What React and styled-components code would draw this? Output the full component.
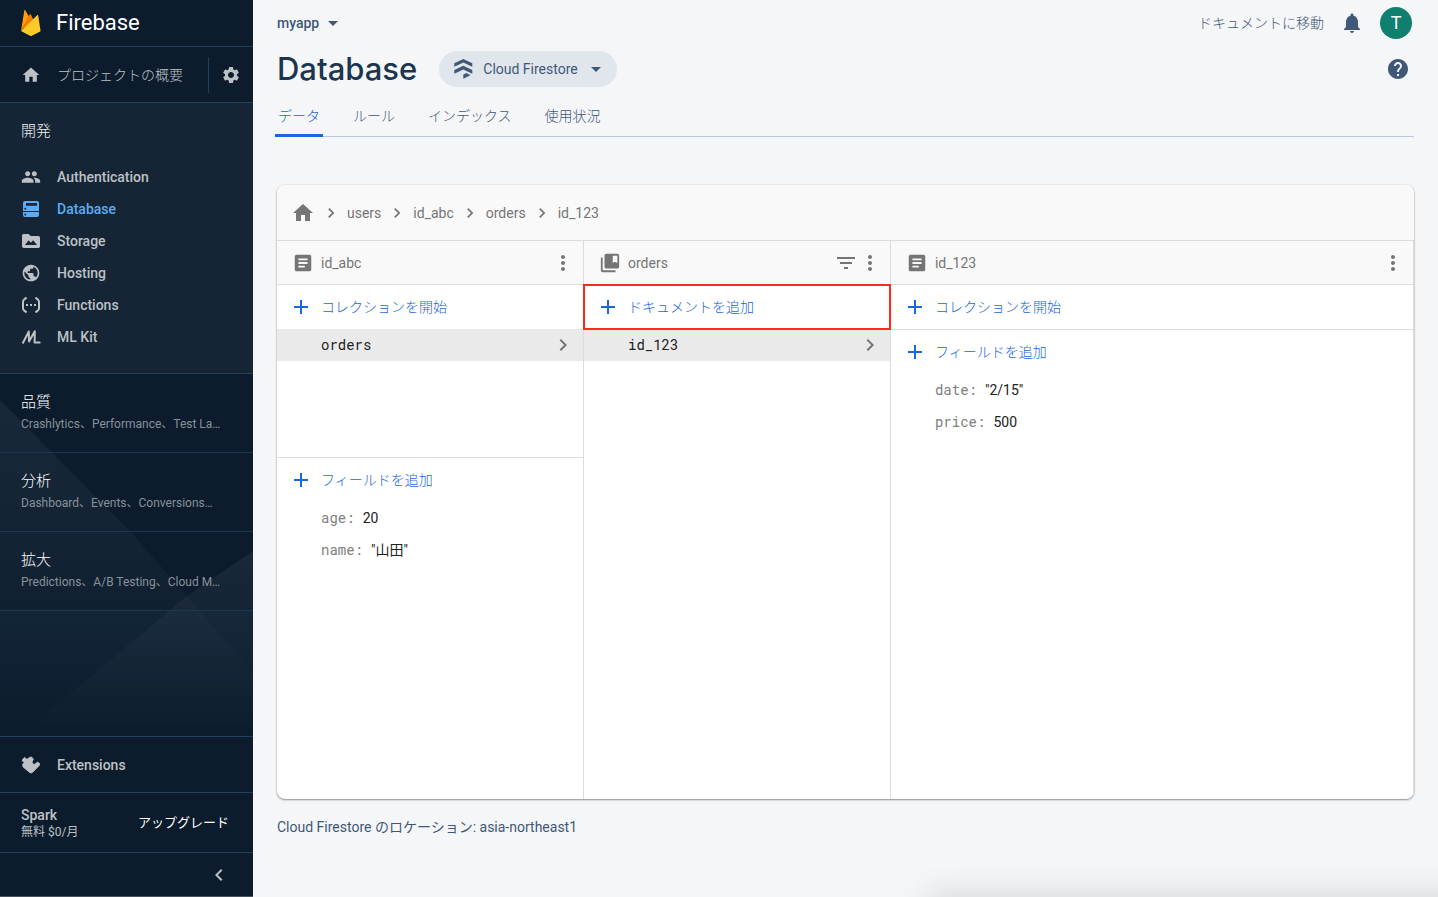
import React from "react";
import styled, { createGlobalStyle, css } from "styled-components";
import {
  MdHome,
  MdSettings,
  MdPeople,
  MdPublic,
  MdNotifications,
  MdHelp,
  MdMoreVert,
  MdFilterList,
  MdChevronRight,
  MdChevronLeft,
  MdArticle,
  MdCollectionsBookmark,
  MdArrowDropDown,
  MdAdd,
} from "react-icons/md";

const sans = `Roboto, "Noto Sans CJK JP", sans-serif`;
const mono = `"Roboto Mono", "DejaVu Sans Mono", "Noto Sans CJK JP", monospace`;
const display = `"Google Sans", Inter, Roboto, sans-serif`;

const color = {
  nav: "#0c1c2d",
  navRaised: "#152536",
  navLine: "#22405e",
  navText: "#bcc1c5",
  navActive: "#5aacf5",
  page: "#f5f6f8",
  slate: "#3f5878",
  blue: "#1967e0",
  grey: "#757575",
  line: "#dcdcdc",
};

const GlobalStyle = createGlobalStyle`
  *, *::before, *::after { box-sizing: border-box; }
  body { margin: 0; background: ${color.page}; font: 400 14px/20px ${sans}; color: #212121; }
  button { font: inherit; color: inherit; background: none; border: 0; padding: 0; margin: 0; cursor: pointer; text-align: left; }
  a { color: inherit; text-decoration: none; }
  ul, ol, dl, dd { list-style: none; margin: 0; padding: 0; }
  h1, h2, h3, p { margin: 0; font: inherit; }
  svg { display: block; flex: none; }
`;

const Shell = styled.div`
  display: flex;
  min-height: 100vh;
`;

/* ---------- Side navigation ---------- */

const Sidebar = styled.nav`
  position: relative;
  z-index: 0;
  flex: 0 0 253px;
  display: flex;
  flex-direction: column;
  background: ${color.nav};
  color: ${color.navText};
  border-bottom: 1px solid #47525d;
`;

const Facets = styled.svg`
  position: absolute;
  z-index: -1;
  left: 0;
  top: 374px;
  width: 253px;
  height: 362px;
`;

const Brand = styled.a`
  display: flex;
  align-items: center;
  gap: 15px;
  height: 47px;
  padding-left: 21px;
  border-bottom: 1px solid ${color.navLine};
  font-size: 22px;
  line-height: 28px;
  color: #fff;
`;

const Overview = styled.div`
  display: flex;
  align-items: center;
  height: 56px;
  border-bottom: 1px solid ${color.navLine};
`;

const OverviewLink = styled.a`
  flex: 1;
  display: flex;
  align-items: center;
  gap: 16px;
  height: 36px;
  padding-left: 21px;
  border-right: 1px solid ${color.navLine};
  font-weight: 300;
`;

const GearButton = styled.button`
  display: grid;
  place-items: center;
  width: 44px;
  height: 36px;
`;

const DevelopSection = styled.section`
  padding-bottom: 20px;
  background: ${color.navRaised};
  border-bottom: 1px solid ${color.navLine};
`;

const SectionTitle = styled.h2`
  margin-bottom: 2px;
  padding-left: 21px;
  font-size: 15px;
  font-weight: 300;
  line-height: 56px;
  color: #f2f3f4;
`;

const NavLink = styled.a`
  display: flex;
  align-items: center;
  gap: 16px;
  height: ${(p) => (p.$tall ? 56 : 32)}px;
  padding-left: 21px;
  font-weight: 500;
  color: ${(p) => (p.$active ? color.navActive : "inherit")};
  border-bottom: ${(p) => (p.$tall ? `1px solid ${color.navLine}` : "0")};
`;

const Group = styled.button`
  display: block;
  width: 100%;
  padding: 16px 24px 20px 21px;
  border-bottom: 1px solid #1b3853;
`;

const GroupTitle = styled.span`
  display: block;
  margin-bottom: 2px;
  font-size: 15px;
  font-weight: 300;
  line-height: 24px;
  color: #fff;
`;

const GroupSummary = styled.span`
  display: block;
  overflow: hidden;
  font-size: 12px;
  line-height: 16px;
  white-space: nowrap;
  text-overflow: ellipsis;
  color: #87919a;
`;

const Spacer = styled.div`
  flex: 1;
  border-bottom: 1px solid ${color.navLine};
`;

const Plan = styled.div`
  display: flex;
  align-items: center;
  justify-content: space-between;
  height: 60px;
  padding: 0 24px 0 21px;
  border-bottom: 1px solid ${color.navLine};
`;

const PlanName = styled.p`
  font-weight: 500;
  line-height: 18px;
`;

const PlanPrice = styled.p`
  font-size: 12px;
  line-height: 16px;
`;

const UpgradeButton = styled.button`
  font-size: 13px;
  color: #fff;
`;

const CollapseButton = styled.button`
  display: flex;
  align-items: center;
  justify-content: flex-end;
  height: 43px;
  padding-right: 22px;
`;

/* ---------- Page header ---------- */

const Main = styled.main`
  flex: 1;
  min-width: 0;
  display: flex;
  flex-direction: column;
  padding: 0 24px;
`;

const TopBar = styled.header`
  display: flex;
  align-items: center;
  justify-content: space-between;
  height: 46px;
  padding-right: 2px;
  color: ${color.slate};
`;

const ProjectButton = styled.button`
  display: flex;
  align-items: center;
  gap: 2px;
  font-weight: 500;
`;

const TopActions = styled.div`
  display: flex;
  align-items: center;
  gap: 16px;
`;

const DocsLink = styled.a`
  font-weight: 300;
`;

const Avatar = styled.button`
  width: 32px;
  height: 32px;
  border-radius: 50%;
  background: #0f7f6e;
  color: #fff;
  font-size: 18px;
  text-align: center;
`;

const TitleRow = styled.div`
  display: flex;
  align-items: center;
  height: 46px;
`;

const PageTitle = styled.h1`
  margin-right: 22px;
  font: 500 31px/40px ${display};
  color: #1b3550;
`;

const ProductButton = styled.button`
  display: flex;
  align-items: center;
  height: 36px;
  padding: 0 9px 0 12px;
  border-radius: 18px;
  background: #e1e6ed;
  color: ${color.slate};
`;

const ProductName = styled.span`
  margin: 0 6px 0 8px;
`;

const IconButton = styled.button`
  display: grid;
  place-items: center;
  width: ${(p) => p.$size || 24}px;
  height: ${(p) => p.$size || 24}px;
  margin-left: ${(p) => (p.$end ? "auto" : 0)};
  color: ${(p) => p.$tone || "inherit"};
`;

const Tabs = styled.div`
  display: flex;
  gap: 27px;
  height: 45px;
  margin: 0 0 48px -2px;
  border-bottom: 1px solid #b7c7dc;
`;

const Tab = styled.button`
  height: 45px;
  padding: 5px 3px 0;
  font-weight: 300;
  color: ${color.slate};
  border-bottom: 3px solid transparent;
  ${(p) =>
    p.$active &&
    css`
      color: ${color.blue};
      border-bottom-color: ${color.blue};
    `}
`;

/* ---------- Data browser ---------- */

const Card = styled.section`
  flex: 1;
  display: flex;
  flex-direction: column;
  overflow: hidden;
  border-radius: 8px;
  background: #fff;
  box-shadow: 0 1px 2px rgba(0, 0, 0, 0.4), 0 0 2px rgba(0, 0, 0, 0.14);
`;

const Breadcrumbs = styled.ol`
  display: flex;
  align-items: center;
  gap: 6px;
  height: 56px;
  padding-left: 14px;
  background: #f9f9f9;
  border-bottom: 1px solid ${color.line};
  color: ${color.grey};
`;

const Crumb = styled.li`
  display: flex;
  align-items: center;
  gap: 6px;
`;

const Columns = styled.div`
  flex: 1;
  display: grid;
  grid-template-columns: 27fr 27fr 46fr;
`;

const Column = styled.section`
  min-width: 0;
  border-right: 1px solid ${color.line};
`;

const ColumnHeader = styled.header`
  display: flex;
  align-items: center;
  gap: 7px;
  height: 44px;
  padding: 0 8px 0 15px;
  background: #f9f9f9;
  border-bottom: 1px solid ${color.line};
  color: ${color.grey};
`;

const ColumnTools = styled.div`
  display: flex;
  margin-left: auto;
`;

const AddButton = styled.button`
  position: relative;
  display: flex;
  align-items: center;
  gap: 8px;
  width: 100%;
  height: ${(p) => (p.$divided ? 45 : 44)}px;
  padding-left: 12px;
  font-weight: 300;
  color: ${color.blue};
  border-bottom: ${(p) => (p.$divided ? `1px solid ${color.line}` : "0")};
  ${(p) =>
    p.$highlighted &&
    css`
      outline: 2px solid #fb2a1c;
      outline-offset: -1px;
    `}
`;

const ItemList = styled.ul`
  min-height: ${(p) => (p.$split ? 129 : 32)}px;
  border-bottom: ${(p) => (p.$split ? `1px solid ${color.line}` : "0")};
`;

const Item = styled.a`
  display: flex;
  align-items: center;
  justify-content: space-between;
  height: 32px;
  padding: 0 8px 0 44px;
  background: #eaeaea;
  font-family: ${mono};
`;

const Fields = styled.dl`
  padding-left: 44px;
`;

const Field = styled.div`
  display: flex;
  gap: 8px;
  line-height: 32px;
`;

const FieldName = styled.dt`
  font-family: ${mono};
  color: #808080;
`;

const Location = styled.p`
  margin: 18px 0 60px;
  color: ${color.slate};
`;

const DockShadow = styled.div`
  position: fixed;
  left: 65%;
  right: -20px;
  bottom: -24px;
  height: 20px;
  box-shadow: 0 0 32px 8px rgba(0, 0, 0, 0.12);
  pointer-events: none;
`;

/* ---------- Drawings ---------- */

const FirebaseLogo = () => (
  <svg width="20" height="26" viewBox="0 0 20 26" aria-hidden="true">
    <path fill="#ffa000" d="M0 21 3.3.6c.1-.6.9-.7 1.2-.2L8 6.8z" />
    <path fill="#f57c00" d="M12.4 9.8 9.8 4.4c-.3-.5-.9-.5-1.2 0L0 21z" />
    <path fill="#ffca28" d="M19.600 21.200 17.200 5.500c-.1-.5-.7-.7-1.1-.3L0 21l9 4.800c.6.3 1.300.3 1.900 0z" />
  </svg>
);

const Glyph = ({ size = 20, children }) => (
  <svg width={size} height={size} viewBox={`0 0 ${size} ${size}`} fill="currentColor" aria-hidden="true">
    {children}
  </svg>
);

const DatabaseIcon = () => (
  <Glyph>
    <path
      fillRule="evenodd"
      d="M4 2h12a2 2 0 0 1 2 2v8H2V4a2 2 0 0 1 2-2zm1 2v2.700h11V4zM4.300 8.800a1 1 0 1 0 0 2 1 1 0 0 0 0-2zM2 13h16v3a2 2 0 0 1-2 2H4a2 2 0 0 1-2-2zm2.300 1.500a1 1 0 1 0 0 2 1 1 0 0 0 0-2z"
    />
  </Glyph>
);

const StorageIcon = () => (
  <Glyph>
    <path
      fillRule="evenodd"
      d="M2.700 3h5l2 2h7.600c.9 0 1.700.8 1.700 1.700v8.600c0 .9-.8 1.700-1.700 1.700H2.700C1.800 17 1 16.200 1 15.300V4.700C1 3.800 1.800 3 2.700 3zM4 14h12l-3.800-4.800-2.500 2.600L7.600 9.300z"
    />
  </Glyph>
);

const FunctionsIcon = () => (
  <Glyph>
    <path
      fill="none"
      stroke="currentColor"
      strokeWidth="2"
      d="M5.600 2.600 3.200 4.400Q2 5.400 2 7v6q0 1.600 1.200 2.600l2.400 1.800M14.400 2.600l2.400 1.800Q18 5.400 18 7v6q0 1.600-1.200 2.600l-2.400 1.800"
    />
    <path d="M5 9h2v2H5zM9 9h2v2H9zM13 9h2v2h-2z" />
  </Glyph>
);

const MlIcon = () => (
  <Glyph>
    <path
      fill="none"
      stroke="currentColor"
      strokeWidth="2"
      strokeLinejoin="round"
      d="M1.600 16.500 7.800 4.500 8 14.500 13.800 4.200 13.600 15.500H19.500"
    />
  </Glyph>
);

const ExtensionsIcon = () => (
  <Glyph>
    <path
      stroke="currentColor"
      strokeWidth="1"
      strokeLinejoin="round"
      d="M1.500 4.600 3.700 2.500 5.300 4.100 7.300 3.800 8.600 2.200H10.800L12.300 4.200 11.300 6.300C10.600 8.300 12.200 9.900 14.200 9.100L16.200 7.300 18.300 8.200 18.400 10.300 11.400 17.400Q10 18.500 8.600 17.400L2 11.800 1.600 9.600 3.200 7.600 1.600 6z"
    />
  </Glyph>
);

const FirestoreIcon = () => (
  <Glyph size={24}>
    <path d="M3.300 6.300 12.300 2l9 4.300v3.500l-9-4.200-9 4.200zM3.300 13l9-4.300 9 4.300v3.700l-9-4.300-9 4.300zM12.300 17.600l3.200-1.600 4 2.300-7.200 3.500z" />
  </Glyph>
);

const products = [
  { name: "Authentication", icon: <MdPeople size={20} /> },
  { name: "Database", icon: <DatabaseIcon />, active: true },
  { name: "Storage", icon: <StorageIcon /> },
  { name: "Hosting", icon: <MdPublic size={20} /> },
  { name: "Functions", icon: <FunctionsIcon /> },
  { name: "ML Kit", icon: <MlIcon /> },
];

const groups = [
  { title: "品質", summary: "Crashlytics、Performance、Test La…" },
  { title: "分析", summary: "Dashboard、Events、Conversions…" },
  { title: "拡大", summary: "Predictions、A/B Testing、Cloud M…" },
];

const path = ["users", "id_abc", "orders", "id_123"];
const tabs = ["データ", "ルール", "インデックス", "使用状況"];

const MoreButton = () => (
  <IconButton aria-label="その他">
    <MdMoreVert size={24} />
  </IconButton>
);

const Add = ({ children, ...props }) => (
  <AddButton {...props}>
    <MdAdd size={24} />
    {children}
  </AddButton>
);

const FieldList = ({ fields }) => (
  <Fields>
    {fields.map(([name, value]) => (
      <Field key={name}>
        <FieldName>{name}:</FieldName>
        <dd>{value}</dd>
      </Field>
    ))}
  </Fields>
);

const SelectedItem = ({ children }) => (
  <li>
    <Item href="#">
      {children}
      <MdChevronRight size={24} color={color.grey} />
    </Item>
  </li>
);

export default function App() {
  return (
    <>
      <GlobalStyle />
      <Shell>
        <Sidebar>
          <Facets viewBox="0 0 253 362" preserveAspectRatio="none" aria-hidden="true">
            <defs>
              <linearGradient id="facet" x1="0" y1="0" x2="0" y2="1">
                <stop offset="0" stopColor="#fff" stopOpacity="0.055" />
                <stop offset="1" stopColor="#fff" stopOpacity="0" />
              </linearGradient>
              <linearGradient id="glow" x1="0" y1="0" x2="0" y2="1">
                <stop offset="0" stopColor="#1d4263" stopOpacity="0.12" />
                <stop offset="1" stopColor="#1d4263" stopOpacity="0" />
              </linearGradient>
            </defs>
            <path fill="url(#facet)" d="M0 26 130 157 187 222 253 300V362H0z" />
            <path fill="url(#facet)" d="M253 177 187 222 20 362H253z" />
            <path fill="url(#glow)" d="M0 237H253V362H0z" />
          </Facets>
          <Brand href="#">
            <FirebaseLogo />
            Firebase
          </Brand>
          <Overview>
            <OverviewLink href="#">
              <MdHome size={20} />
              プロジェクトの概要
            </OverviewLink>
            <GearButton aria-label="設定">
              <MdSettings size={20} />
            </GearButton>
          </Overview>
          <DevelopSection>
            <SectionTitle>開発</SectionTitle>
            {products.map((p) => (
              <NavLink key={p.name} href="#" $active={p.active}>
                {p.icon}
                {p.name}
              </NavLink>
            ))}
          </DevelopSection>
          {groups.map((g) => (
            <Group key={g.title}>
              <GroupTitle>{g.title}</GroupTitle>
              <GroupSummary>{g.summary}</GroupSummary>
            </Group>
          ))}
          <Spacer />
          <NavLink href="#" $tall>
            <ExtensionsIcon />
            Extensions
          </NavLink>
          <Plan>
            <div>
              <PlanName>Spark</PlanName>
              <PlanPrice>無料 $0/月</PlanPrice>
            </div>
            <UpgradeButton>アップグレード</UpgradeButton>
          </Plan>
          <CollapseButton aria-label="メニューを閉じる">
            <MdChevronLeft size={24} />
          </CollapseButton>
        </Sidebar>

        <Main>
          <TopBar>
            <ProjectButton>
              myapp
              <MdArrowDropDown size={24} />
            </ProjectButton>
            <TopActions>
              <DocsLink href="#">ドキュメントに移動</DocsLink>
              <IconButton aria-label="通知">
                <MdNotifications size={24} />
              </IconButton>
              <Avatar>T</Avatar>
            </TopActions>
          </TopBar>
          <TitleRow>
            <PageTitle>Database</PageTitle>
            <ProductButton>
              <FirestoreIcon />
              <ProductName>Cloud Firestore</ProductName>
              <MdArrowDropDown size={24} />
            </ProductButton>
            <IconButton $size={32} $end $tone={color.slate} aria-label="ヘルプ">
              <MdHelp size={24} />
            </IconButton>
          </TitleRow>
          <Tabs role="tablist">
            {tabs.map((t, i) => (
              <Tab key={t} role="tab" aria-selected={i === 0} $active={i === 0}>
                {t}
              </Tab>
            ))}
          </Tabs>

          <Card>
            <Breadcrumbs>
              <Crumb>
                <a href="#" aria-label="ルート">
                  <MdHome size={24} />
                </a>
              </Crumb>
              {path.map((name) => (
                <Crumb key={name}>
                  <MdChevronRight size={20} />
                  <a href="#">{name}</a>
                </Crumb>
              ))}
            </Breadcrumbs>
            <Columns>
              <Column>
                <ColumnHeader>
                  <MdArticle size={22} />
                  id_abc
                  <ColumnTools>
                    <MoreButton />
                  </ColumnTools>
                </ColumnHeader>
                <Add>コレクションを開始</Add>
                <ItemList $split>
                  <SelectedItem>orders</SelectedItem>
                </ItemList>
                <Add>フィールドを追加</Add>
                <FieldList
                  fields={[
                    ["age", "20"],
                    ["name", '"山田"'],
                  ]}
                />
              </Column>
              <Column>
                <ColumnHeader>
                  <MdCollectionsBookmark size={22} />
                  orders
                  <ColumnTools>
                    <IconButton aria-label="フィルタ">
                      <MdFilterList size={24} />
                    </IconButton>
                    <MoreButton />
                  </ColumnTools>
                </ColumnHeader>
                <Add $highlighted>ドキュメントを追加</Add>
                <ItemList>
                  <SelectedItem>id_123</SelectedItem>
                </ItemList>
              </Column>
              <Column>
                <ColumnHeader>
                  <MdArticle size={22} />
                  id_123
                  <ColumnTools>
                    <MoreButton />
                  </ColumnTools>
                </ColumnHeader>
                <Add $divided>コレクションを開始</Add>
                <Add>フィールドを追加</Add>
                <FieldList
                  fields={[
                    ["date", '"2/15"'],
                    ["price", "500"],
                  ]}
                />
              </Column>
            </Columns>
          </Card>
          <Location>Cloud Firestore のロケーション: asia-northeast1</Location>
        </Main>
      </Shell>
      <DockShadow />
    </>
  );
}
